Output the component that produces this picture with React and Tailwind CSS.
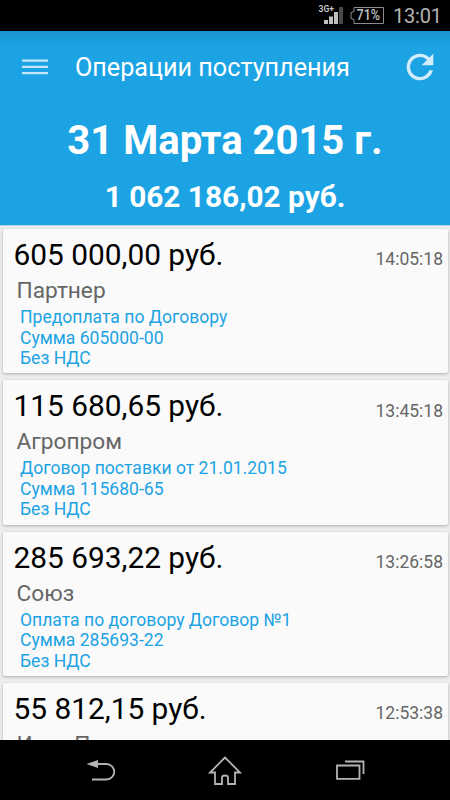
const operations = [
  { amount: "605 000,00 руб.", time: "14:05:18", company: "Партнер", lines: ["Предоплата по Договору", "Сумма 605000-00", "Без НДС"] },
  { amount: "115 680,65 руб.", time: "13:45:18", company: "Агропром", lines: ["Договор поставки от 21.01.2015", "Сумма 115680-65", "Без НДС"] },
  { amount: "285 693,22 руб.", time: "13:26:58", company: "Союз", lines: ["Оплата по договору Договор №1", "Сумма 285693-22", "Без НДС"] },
  { amount: "55 812,15 руб.", time: "12:53:38", company: "Инст Плюс", lines: [] },
];

function StatusBar() {
  return (
    <div className="flex h-[31px] shrink-0 items-start justify-end bg-black text-[#b4b4b4]">
      <svg width="80" height="31" viewBox="310 0 80 31" className="shrink-0">
        <text x="318.500" y="11.500" fontSize="9.500" fontWeight="600" fill="#c8c8c8" textLength="15.500" lengthAdjust="spacingAndGlyphs">3G+</text>
        <path d="M324 20h4v4h-4zM329 16.500h4V24h-4zM334 12h4v12h-4z" fill="#c0c0c0" />
        <path d="M339 7h4v17h-4z" fill="#4a4a4a" />
        <path d="M354 7.500H383.500V23.500H354V19.500L351 18.500V12.500L354 11.500Z" fill="none" stroke="#8c8c8c" />
        <text x="356.500" y="20.200" fontSize="14" fontWeight="500" fill="#c4c4c4" textLength="23.500" lengthAdjust="spacingAndGlyphs">71%</text>
      </svg>
      <span className="w-[60px] pl-[3px] text-[20px] leading-[32px] tracking-[-0.2px]">13:01</span>
    </div>
  );
}

function Header() {
  return (
    <header className="h-[194px] shrink-0 bg-[#1ca3e4] bg-linear-to-b from-[#1b92cd] to-[#1ca3e4] to-[14px] text-white">
      <div className="flex h-[72px] items-center pr-[10px] pl-[22px]">
        <svg width="53" height="16" viewBox="0 0 53 16" fill="#c3e6f8" className="-mt-[1px]">
          <path d="M0 .5h26v2.300H0zM0 6.700h26v2.300H0zM0 12.900h26v2.300H0z" />
        </svg>
        <h1 className="flex-1 pt-[2px] text-[25.200px] leading-[30px] whitespace-nowrap">Операции поступления</h1>
        <svg width="40" height="40" viewBox="0 0 24 24" fill="#d2ecf9">
          <path d="M17.650 6.350A7.958 7.958 0 0 0 12 4a8 8 0 1 0 7.730 10h-2.080A6 6 0 1 1 12 6c1.660 0 3.140.690 4.220 1.780L13 11h7V4z" />
        </svg>
      </div>
      <p className="mt-[13px] text-center text-[40px] leading-[50px] font-bold">31 Марта 2015 г.</p>
      <p className="mt-[13px] text-center text-[29.800px] leading-[36px] font-bold">1 062 186,02 руб.</p>
    </header>
  );
}

function Operation({ amount, time, company, lines }) {
  return (
    <article className="h-[144.300px] shrink-0 rounded-[2px] bg-[#fafafa] pt-[8px] pr-[4.500px] pl-[11px] shadow-[0_1px_3px_rgba(0,0,0,0.28)]">
      <div className="flex h-[36px] items-center justify-between whitespace-nowrap">
        <span className="pt-[1px] text-[29.850px] text-black">{amount}</span>
        <span className="pt-[9px] text-[17.500px] text-[#666]">{time}</span>
      </div>
      <div className="h-[34px] pl-[3px] text-[22.700px] leading-[35.500px] text-[#666]">{company}</div>
      <div className="pl-[6.500px] text-[17.570px] leading-[20.500px] text-[#1ca3e4]">
        {lines.map((line) => (
          <p key={line}>{line}</p>
        ))}
      </div>
    </article>
  );
}

function NavBar() {
  return (
    <nav className="flex h-[60px] shrink-0 items-center justify-center bg-black">
      <svg width="450" height="60" viewBox="0 740 450 60" fill="none" stroke="#b4b4b4" strokeWidth="1.800">
        <path d="M93 764H106.500a7.700 7.700 0 0 1 0 15.500H92" />
        <path d="M86.500 764L98 760V768Z" fill="#b4b4b4" stroke="none" />
        <path d="M225 757.500L210 772.500H215V784H222V777.500Q222 775.500 225 775.500Q228 775.500 228 777.500V784H235V772.500H240Z" />
        <path d="M337 765.500H359.500V778.800H337ZM345 761.500H363.500V774" />
      </svg>
    </nav>
  );
}

export default function App() {
  return (
    <div className="flex h-[800px] w-[450px] flex-col overflow-hidden bg-black font-[Roboto,sans-serif]">
      <StatusBar />
      <Header />
      <main className="flex min-h-0 flex-1 flex-col gap-[7px] overflow-hidden border-t border-[#b9d5ee] bg-[#ededed] px-[2.500px] pt-[3px]">
        {operations.map((operation) => (
          <Operation key={operation.time} {...operation} />
        ))}
      </main>
      <NavBar />
    </div>
  );
}
